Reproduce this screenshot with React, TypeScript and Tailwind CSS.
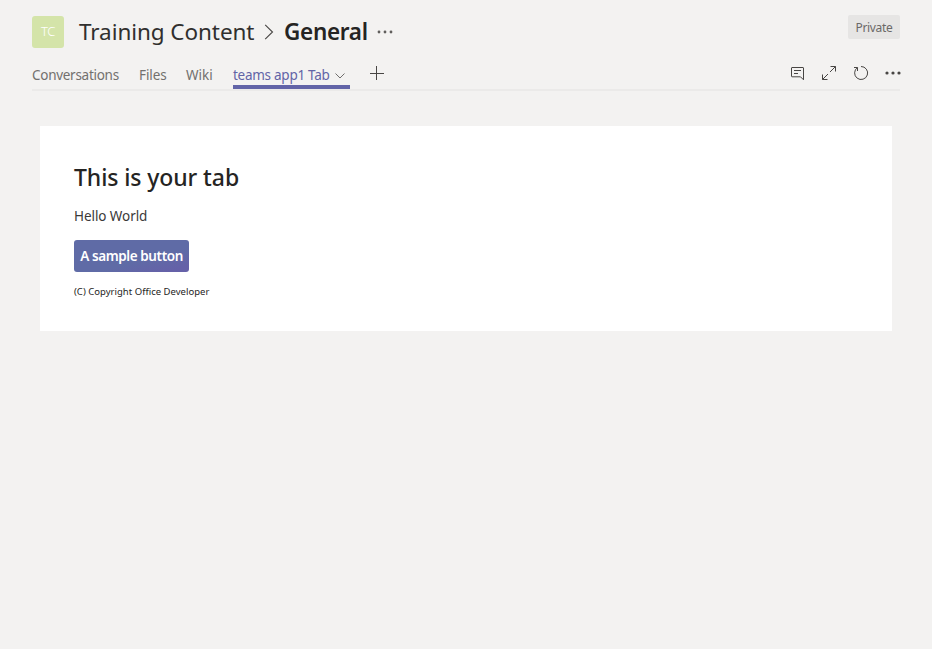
import React from "react";

function Dots({ className, r }: { className: string; r: number }) {
  return (
    <svg className={className} viewBox="0 0 16 4" fill="currentColor">
      <circle cx="2" cy="2" r={r} />
      <circle cx="8" cy="2" r={r} />
      <circle cx="14" cy="2" r={r} />
    </svg>
  );
}

function Header() {
  return (
    <header className="flex h-16 items-start justify-between pt-[15px]">
      <div className="flex h-[34px] items-center">
        <div className="mr-[15px] flex h-8 w-8 items-center justify-center rounded-[3px] bg-[#d4e4a9] text-[13px] font-light tracking-[-0.4px] text-white">
          TC
        </div>
        <h1 className="w-[176px] whitespace-nowrap text-[22.5px] leading-8 tracking-[-0.07px] text-[#302f2e]">Training Content</h1>
        <svg className="ml-[9px] h-4 w-[10px]" viewBox="0 0 10 16" fill="none" stroke="#484644" strokeWidth="1.1">
          <path d="M1.2.8 8.5 8l-7.3 7.2" />
        </svg>
        <h2 className="ml-[10px] w-[85px] whitespace-nowrap text-[22.5px] font-semibold leading-8 tracking-[-0.3px]">General</h2>
        <Dots className="ml-2 h-1 w-4 text-[#605e5c]" r={1.4} />
      </div>
      <div className="flex h-6 w-[52px] items-center justify-center rounded-[2px] bg-[#e6e5e4] pt-[2px] text-[12px] tracking-[-0.35px] text-[#6b6967]">
        Private
      </div>
    </header>
  );
}

function Tabs() {
  return (
    <nav className="flex h-[27px] items-start justify-between border-b-2 border-[#ebeae9] text-[13.5px] leading-[23px] text-[#72706e]">
      <div className="flex h-[25px] whitespace-nowrap">
        <span className="w-[107px] tracking-[-0.28px]">Conversations</span>
        <span className="w-[47px] tracking-[-0.1px]">Files</span>
        <span className="w-[47px]">Wiki</span>
        <div className="flex h-[25px] w-[117px] border-b-4 border-[#6264a7] text-[#6264a7]">
          <span className="w-[102px] tracking-[-0.27px]">teams app1 Tab</span>
          <svg className="mt-[9px] h-[6px] w-[10px]" viewBox="0 0 10 6" fill="none" stroke="#605e5c" strokeWidth=".9">
            <path d="m.5.5 4.5 4.5L9.5.5" />
          </svg>
        </div>
        <svg className="ml-5 mt-[2px] h-[14px] w-[14px]" viewBox="0 0 14 14" stroke="#484644">
          <path d="M0 7.5h14M6.5 0v14" />
        </svg>
      </div>
      <div className="flex text-[#484644]">
        <svg className="mt-[1px] h-4 w-4" viewBox="0 0 16 16" fill="none" stroke="currentColor">
          <path d="M3 2.5h11a.5.5 0 0 1 .5.5v11.800l-3-3H3a.5.5 0 0 1-.5-.5V3a.5.5 0 0 1 .5-.5ZM5 5.500h7M5 8.500h4" />
        </svg>
        <svg className="ml-4 mt-[1px] h-4 w-4" viewBox="0 0 16 16" fill="none" stroke="currentColor">
          <path d="M9.500 1.500h5v5M14.500 1.500l-5.500 5.500M1.500 9.500v5h5M1.500 14.500l5.500-5.500" />
        </svg>
        <svg className="ml-4 mt-[1px] h-4 w-4" viewBox="0 0 16 16" fill="none" stroke="currentColor">
          <path d="M8 1.500A6.500 6.500 0 1 1 4.500 2.600M1 2.500h3.500V6" />
        </svg>
        <Dots className="-mr-[1px] ml-4 mt-[7px] h-1 w-4 text-[#484644]" r={1.6} />
      </div>
    </nav>
  );
}

export default function App() {
  return (
    <div className="min-h-screen bg-[#f3f2f1] pl-8 pr-8 font-['Noto_Sans','Open_Sans',sans-serif] text-[#252423]">
      <Header />
      <Tabs />
      <main className="mx-2 mt-[35px] flex h-[205px] flex-col items-start whitespace-nowrap bg-white pl-[34px] pt-[35px]">
        <h1 className="text-[23px] font-medium leading-8 tracking-[-0.1px]">This is your tab</h1>
        <p className="mt-[13px] text-[13.5px] leading-5 tracking-[-0.07px] text-[#3a3938]">Hello World</p>
        <button className="mt-[14px] flex h-8 w-[115px] items-center justify-center rounded-[3px] bg-linear-to-br from-[#5f6ba6] from-60% to-[#6561a8] to-90% text-[13.5px] font-semibold tracking-[-0.4px] text-white">
          A sample button
        </button>
        <p className="mt-[12px] text-[9.5px] leading-4 tracking-[0.02px]">(C) Copyright Office Developer</p>
      </main>
    </div>
  );
}
